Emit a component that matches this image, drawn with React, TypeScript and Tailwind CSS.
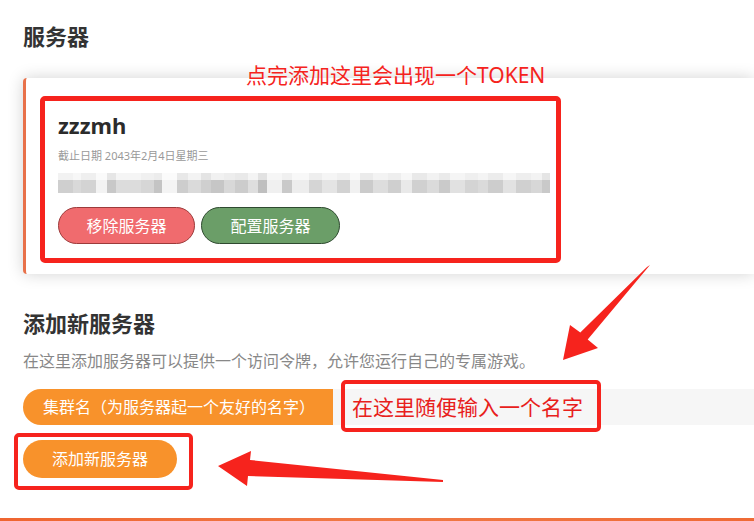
import React from 'react';

const cjk = { fontFamily: '"Noto Sans", "Noto Sans CJK SC", sans-serif' };

// mosaic strip standing in for the blurred token: [weight, top, bottom]
const mosaic: [number, string, string][] = [
    [14, '#f2f2f2', '#cfcfcf'], [8, '#f7f7f7', '#d9d9d9'], [14, '#efefef', '#d3d3d3'],
    [10, '#fafafa', '#f3f3f3'], [8, '#e6e6e6', '#c8c8c8'], [24, '#f5f5f5', '#dcdcdc'],
    [12, '#f0f0f0', '#d6d6d6'], [8, '#ececec', '#c4c4c4'], [14, '#fbfbfb', '#f4f4f4'],
    [10, '#e8e8e8', '#cdcdcd'], [12, '#f3f3f3', '#dadada'], [10, '#e4e4e4', '#cfcfcf'],
    [12, '#f1f1f1', '#c6c6c6'], [10, '#ededed', '#d8d8d8'], [12, '#e9e9e9', '#cccccc'],
    [10, '#f4f4f4', '#dedede'], [8, '#e2e2e2', '#bfbfbf'], [14, '#f6f6f6', '#f0f0f0'],
    [10, '#f0f0f0', '#c9c9c9'], [16, '#f8f8f8', '#ededed'], [12, '#eeeeee', '#d5d5d5'],
    [14, '#f5f5f5', '#e4e4e4'], [12, '#f0f0f0', '#d2d2d2'], [10, '#f9f9f9', '#f1f1f1'],
    [12, '#ebebeb', '#cbcbcb'], [14, '#f3f3f3', '#dddddd'], [12, '#eeeeee', '#cfcfcf'],
    [10, '#f7f7f7', '#e9e9e9'], [14, '#e9e9e9', '#d0d0d0'], [12, '#f2f2f2', '#dbdbdb'],
    [10, '#eaeaea', '#cacaca'], [14, '#f5f5f5', '#e1e1e1'], [12, '#efefef', '#d4d4d4'],
    [10, '#f4f4f4', '#dadada'], [14, '#ececec', '#cdcdcd'], [12, '#f6f6f6', '#e2e2e2'],
    [14, '#eeeeee', '#d0d0d0'], [10, '#f3f3f3', '#d7d7d7'], [8, '#e5e5e5', '#c9c9c9'],
];

function TokenStrip() {
    return (
        <div className="mt-[9px] flex h-[20px] w-[492px] overflow-hidden">
            {mosaic.map(([w, top, bottom], i) => (
                <div key={i} className="flex h-full basis-0 flex-col" style={{ flexGrow: w }}>
                    <div className="h-[7px]" style={{ background: top }} />
                    <div className="flex-1" style={{ background: bottom }} />
                </div>
            ))}
        </div>
    );
}

function Annotations() {
    return (
        <>
            <div className="pointer-events-none absolute left-[40px] top-[96px] h-[167px] w-[521px] rounded-[5px] border-[5px] border-[#f6231d]" />
            <div className="pointer-events-none absolute left-[341px] top-[380px] h-[52px] w-[260px] rounded-[5px] border-[4px] border-[#f6231d]" />
            <div className="pointer-events-none absolute left-[14px] top-[433px] h-[57px] w-[179px] rounded-[5px] border-[4px] border-[#f6231d]" />

            <div className="absolute left-[246px] top-[60px] text-[21px] leading-[30px] text-[#f5231d]" style={cjk}>
                点完添加这里会出现一个TOKEN
            </div>
            <div className="absolute left-[352px] top-[392px] text-[21px] leading-[30px] text-[#e8201b]" style={cjk}>
                在这里随便输入一个名字
            </div>

            <svg className="pointer-events-none absolute left-0 top-0" width="754" height="521" viewBox="0 0 754 521">
                <polygon
                    fill="#f6231d"
                    points="650,265 587.7,339.4 598,348 563,360 570,325 580.3,332.6 647,267"
                />
                <polygon
                    fill="#f6231d"
                    points="218,466 251,451 250,460 443,480 443,482 248,476 247,486"
                />
            </svg>
        </>
    );
}

export default function App() {
    return (
        <div className="relative h-[521px] w-full overflow-hidden bg-white text-[#333]" style={cjk}>
            <div className="pl-[23px] pt-[21px]">
                <h2 className="text-[22px] font-bold leading-[30px] text-[#333]">服务器</h2>

                {/* server card */}
                <div className="mt-[27px] rounded-l-[4px] border-l-[3px] border-[#e8714a] bg-white pb-[30px] pl-[32px] pt-[32px] shadow-[0_0_16px_rgba(0,0,0,0.18)]">
                    <div className="text-[22px] font-bold leading-[30px] text-[#2b2b2b]">zzzmh</div>
                    <div className="mt-[8px] text-[11px] leading-[16px] text-[#999]">截止日期 2043年2月4日星期三</div>
                    <TokenStrip />
                    <div className="mt-[14px] flex gap-[6px]">
                        <button className="h-[37px] w-[137px] rounded-full border border-[#9c3b3b] bg-[#f06b6e] text-[16px] text-white">
                            移除服务器
                        </button>
                        <button className="h-[37px] w-[139px] rounded-full border border-[#2f4a30] bg-[#6b9e68] text-[16px] text-white">
                            配置服务器
                        </button>
                    </div>
                </div>

                <h2 className="mt-[34px] text-[22px] font-bold leading-[30px] text-[#333]">添加新服务器</h2>
                <p className="mt-[11px] text-[16px] leading-[24px] text-[#888]">
                    在这里添加服务器可以提供一个访问令牌，允许您运行自己的专属游戏。
                </p>

                <div className="mt-[16px] flex h-[36px]">
                    <div className="flex w-[310px] shrink-0 items-center rounded-l-full bg-[#f8922b] pl-[20px] text-[16px] text-white">
                        集群名（为服务器起一个友好的名字）
                    </div>
                    <input className="h-full flex-1 bg-[#f6f6f6] outline-none" />
                </div>

                <button className="mt-[15px] h-[38px] w-[154px] rounded-full bg-[#f8922b] text-[16px] text-white">
                    添加新服务器
                </button>
            </div>

            <div className="mt-[40px] h-[4px] w-full bg-gradient-to-r from-[#ef6530] via-[#f07a46] to-[#ef6a35]" />

            <Annotations />
        </div>
    );
}
